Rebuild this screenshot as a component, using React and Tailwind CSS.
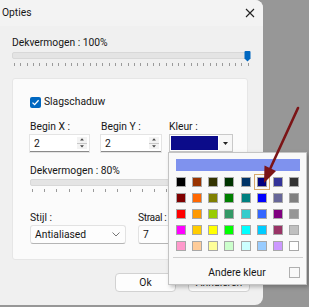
import React from "react";

const palette = [
  ["#000000", "#993300", "#333300", "#003300", "#003366", "#000080", "#333399", "#333333"],
  ["#800000", "#ff6600", "#808000", "#008000", "#008080", "#0000ff", "#666699", "#808080"],
  ["#ff0000", "#ff9900", "#99cc00", "#339966", "#33cccc", "#3366ff", "#800080", "#969696"],
  ["#ff00ff", "#ffcc00", "#ffff00", "#00ff00", "#00ffff", "#00ccff", "#993366", "#c0c0c0"],
  ["#ff99cc", "#ffcc99", "#ffff99", "#ccffcc", "#ccffff", "#99ccff", "#cc99ff", "#ffffff"],
];

const Ticks = ({ count, gap }) => (
  <div className={`flex justify-between px-[2px] ${gap}`}>
    {Array.from({ length: count }).map((_, i) => (
      <div key={i} className="w-px h-[3px] bg-[#9a9a9a]" />
    ))}
  </div>
);

const Spinner = () => (
  <div className="flex flex-col justify-center gap-[1px] w-[10px] my-[2px] mr-[2px] bg-[#f3f3f3]">
    <svg width="10" height="6" viewBox="0 0 10 6"><path d="M2.5 4.5 L5 1.5 L7.5 4.5 Z" fill="#444" /></svg>
    <div className="h-px bg-[#c8c8c8]" />
    <svg width="10" height="6" viewBox="0 0 10 6"><path d="M2.5 1.5 L5 4.5 L7.5 1.5 Z" fill="#444" /></svg>
  </div>
);

const NumberField = ({ value, width }) => (
  <div className={`flex h-[17px] bg-white border-b border-[#8a8a8a] shadow-[0_0_0_1px_#e4e4e4] ${width}`}>
    <span className="flex-1 pl-[4px] leading-[17px]">{value}</span>
    <Spinner />
  </div>
);

export default function App() {
  return (
    <div
      className="relative w-[309px] h-[307px] overflow-hidden bg-[#979797] text-[#161616] text-[10.3px]"
      style={{ fontFamily: 'Roboto, "Noto Sans", sans-serif' }}
    >
      <div className="w-[263px] h-[305px] bg-[#f0f0f0] rounded-r-[8px] flex flex-col">
        <div className="h-[26px] flex items-center justify-between pl-[2px] pr-[8px] bg-[#f3f3f3] rounded-tr-[8px]">
          <span>Opties</span>
          <svg width="10" height="10" viewBox="0 0 10 10">
            <path d="M1 1 L9 9 M9 1 L1 9" stroke="#222" strokeWidth="1.1" />
          </svg>
        </div>

        <div className="px-[12px] flex flex-col">
          <div className="mt-[9px] leading-[15px]">Dekvermogen : 100%</div>
          <div className="relative mt-[1px] h-[11px] w-[239px]">
            <div className="absolute left-0 right-[4px] top-[1px] h-[7px] bg-[#e4e4e4] border border-[#d8d8d8] rounded-[2px]" />
            <svg className="absolute right-0 top-0" width="7" height="11" viewBox="0 0 7 11">
              <path d="M0.5 1 Q0.5 0 1.5 0 L5.5 0 Q6.5 0 6.5 1 L6.5 7.5 L3.5 10.5 L0.5 7.5 Z" fill="#0067c0" />
            </svg>
          </div>
          <div className="w-[239px]">
            <Ticks count={38} gap="mt-[1px]" />
          </div>

          <div className="mt-[12px] w-[236px] h-[182px] bg-[#fbfbfb] border border-[#e6e6e6] rounded-[3px] pl-[17px] pr-[10px] flex flex-col">
            <div className="mt-[16px] flex items-center gap-[3px] h-[14px]">
              <div className="w-[11px] h-[11px] rounded-[2px] bg-[#0067c0] flex items-center justify-center">
                <svg width="9" height="9" viewBox="0 0 9 9">
                  <path d="M1.5 4.6 L3.6 6.6 L7.6 2.2" stroke="#fff" strokeWidth="1.3" fill="none" />
                </svg>
              </div>
              <span>Slagschaduw</span>
            </div>

            <div className="mt-[10px] flex">
              <div className="w-[71px] flex flex-col">
                <span className="leading-[15px]">Begin X :</span>
                <div className="mt-[1px]">
                  <NumberField value="2" width="w-[59px]" />
                </div>
              </div>
              <div className="w-[68px] flex flex-col">
                <span className="leading-[15px]">Begin Y :</span>
                <div className="mt-[1px]">
                  <NumberField value="2" width="w-[60px]" />
                </div>
              </div>
              <div className="flex flex-col">
                <span className="leading-[15px]">Kleur :</span>
                <div className="flex h-[18px] w-[64px] bg-white border border-[#c9c9c9]">
                  <div className="flex-1 m-[1px] bg-[#0b0b8a]" />
                  <div className="w-[13px] flex items-center justify-center bg-[#f7f7f7]">
                    <svg width="7" height="5" viewBox="0 0 7 5"><path d="M1 1 L6 1 L3.5 4 Z" fill="#222" /></svg>
                  </div>
                </div>
              </div>
            </div>

            <div className="mt-[11px] leading-[15px]">Dekvermogen : 80%</div>
            <div className="mt-[1px] h-[7px] bg-[#e4e4e4] border border-[#d8d8d8] rounded-[2px] w-[200px]" />
            <div className="w-[200px]">
              <Ticks count={17} gap="mt-[3px]" />
            </div>

            <div className="mt-[18px] flex">
              <div className="w-[108px] flex flex-col">
                <span className="leading-[15px]">Stijl :</span>
                <div className="w-[96px] h-[19px] flex items-center justify-between pl-[4px] pr-[5px] bg-[#fdfdfd] border border-[#e2e2e2] border-b-[#b5b5b5] rounded-[3px]">
                  <span>Antialiased</span>
                  <svg width="8" height="5" viewBox="0 0 8 5">
                    <path d="M0.5 0.5 L4 4 L7.5 0.5" stroke="#666" strokeWidth="0.9" fill="none" />
                  </svg>
                </div>
              </div>
              <div className="flex flex-col">
                <span className="leading-[15px] tracking-[-0.4px]">Straal :</span>
                <div className="w-[60px] h-[19px] flex items-center pl-[4px] bg-[#fdfdfd] border border-[#e2e2e2] border-b-[#b5b5b5] rounded-[3px]">
                  <span>7</span>
                </div>
              </div>
            </div>
          </div>

          <div className="mt-[13px] flex justify-end gap-[12px] pr-[1px]">
            <button className="w-[61px] h-[19px] bg-[#fdfdfd] border border-[#d2d2d2] rounded-[4px] text-[10.3px] leading-[17px]">Ok</button>
            <button className="w-[62px] h-[19px] bg-[#fdfdfd] border border-[#d2d2d2] rounded-[4px] text-[10.3px] leading-[17px]">Annuleren</button>
          </div>
        </div>
      </div>

      <div className="absolute left-[168px] top-[152px] w-[139px] h-[133px] bg-[#f9f9f9] border border-[#c4c4c4] shadow-[2px_2px_4px_rgba(0,0,0,0.25)] flex flex-col items-center">
        <div className="mt-[6px] w-[124px] h-[12px] bg-[#7f92ee]" />
        <div className="mt-[6px] flex flex-col gap-[6px] w-[124px]">
          {palette.map((row, r) => (
            <div key={r} className="flex justify-between">
              {row.map((c, i) => (
                <div
                  key={i}
                  className={
                    r === 0 && i === 5
                      ? "relative w-[10px] h-[10px] border border-[#9a9a9a] shadow-[0_0_0_2px_#f9f9f9,0_0_0_3px_#d7a86a]"
                      : "w-[10px] h-[10px] border border-[#a8a8a8]"
                  }
                  style={{ backgroundColor: c }}
                />
              ))}
            </div>
          ))}
        </div>
        <div className="mt-[6px] w-[130px] h-px bg-[#cfcfcf]" />
        <div className="mt-[7px] w-[124px] flex items-center">
          <span className="flex-1 text-center pl-[10px] leading-[15px]">Andere kleur</span>
          <div className="w-[11px] h-[11px] border border-[#b0b0b0] bg-[#f9f9f9]" />
        </div>
      </div>

      <svg className="absolute left-0 top-0 pointer-events-none" width="309" height="307" viewBox="0 0 309 307">
        <path d="M298 108 L270.5 168" stroke="#7b1416" strokeWidth="2.6" strokeLinecap="round" />
        <path d="M264 183 L264.5 165.5 L276 171 Z" fill="#7b1416" />
      </svg>
    </div>
  );
}
